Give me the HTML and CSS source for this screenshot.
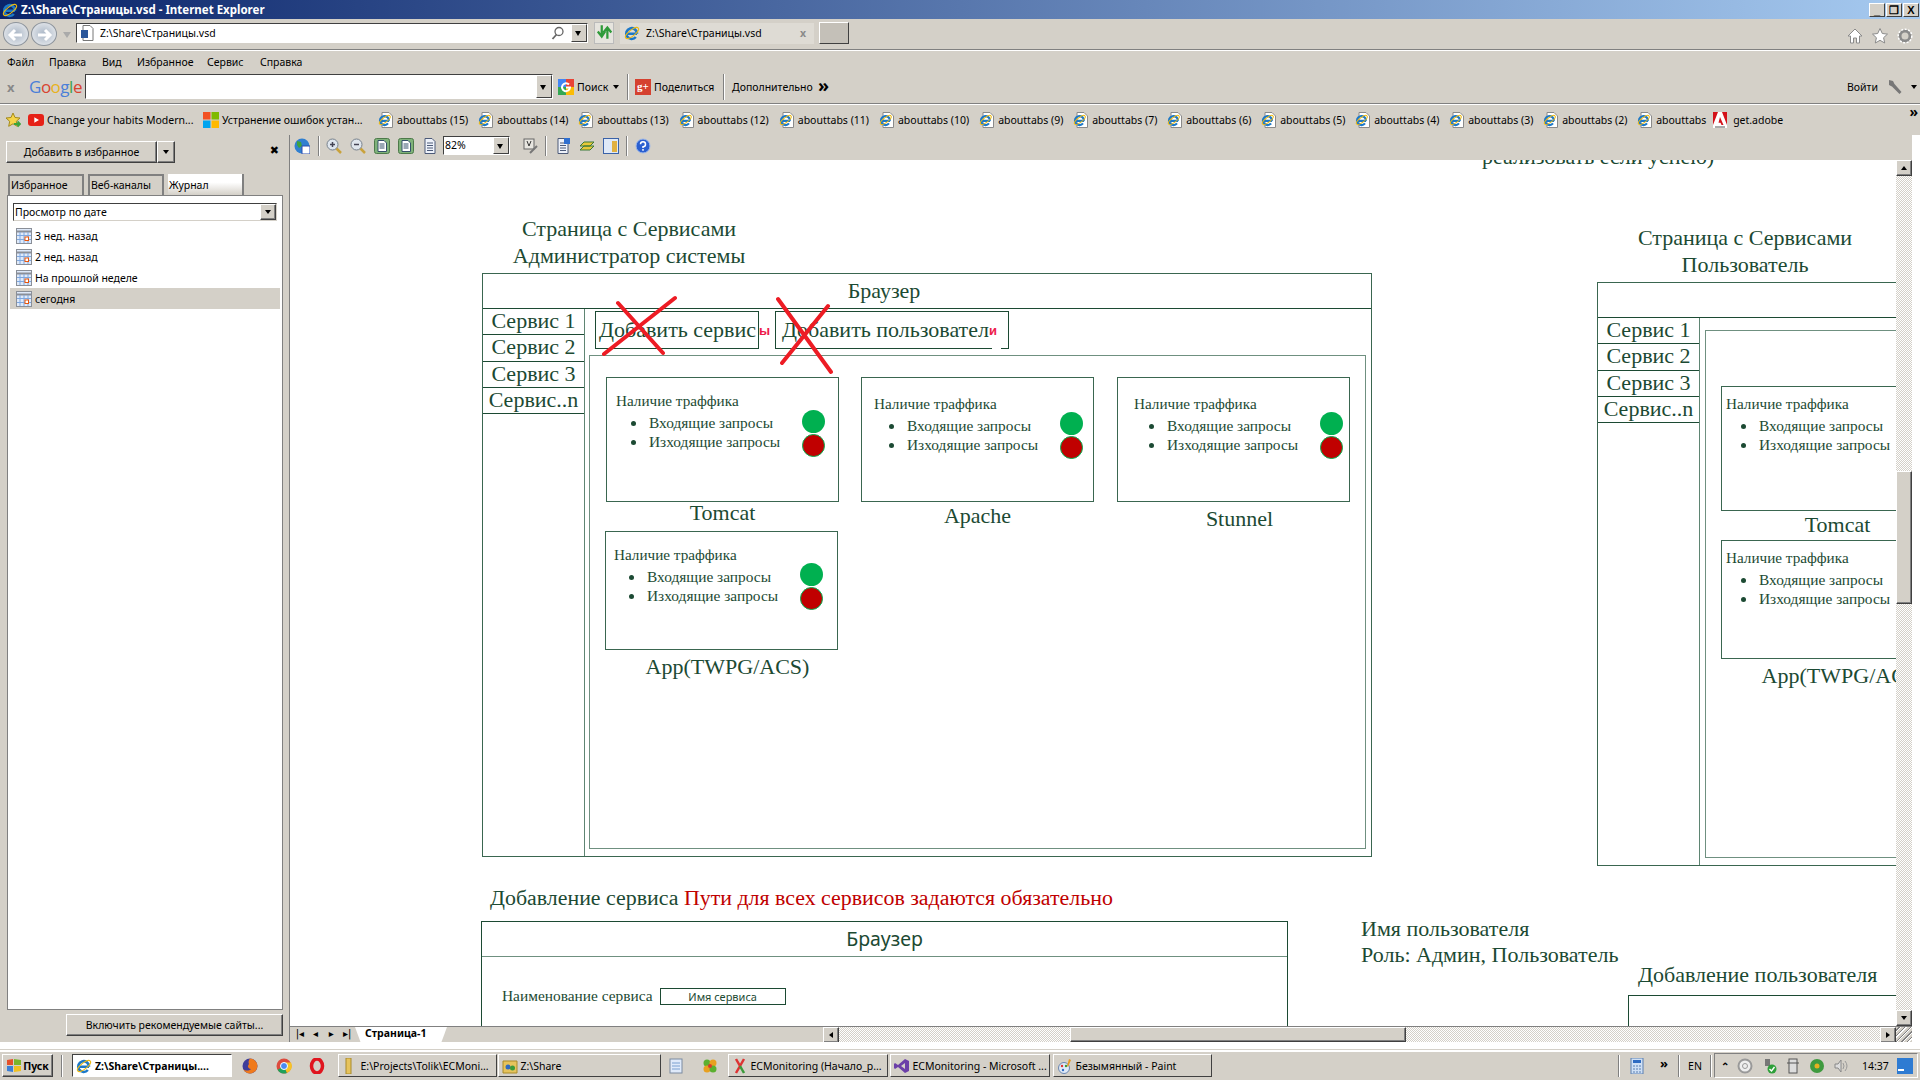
FILE: index.html
```html
<!DOCTYPE html>
<html lang="ru">
<head>
<meta charset="UTF-8">
<title>Z:\Share\Страницы.vsd - Internet Explorer</title>
<link rel="stylesheet" href="styles.css">
</head>
<body>

<svg class="sprites" aria-hidden="true">
  <symbol id="ie" viewBox="0 0 16 16">
    <path d="M3 8.800h10M13 8.800A5.400 5.400 0 1 0 11.800 12" fill="none" stroke="#1c78c8" stroke-width="2.600"/>
    <ellipse cx="8" cy="8" rx="8" ry="3" transform="rotate(-38 8 8)" fill="none" stroke="#efb90e" stroke-width="1"/>
  </symbol>
  <symbol id="page" viewBox="0 0 16 16">
    <path d="M4 .5h7l3.500 3.500v11.500H4z" fill="#fff" stroke="#8a8a8a"/>
    <path d="M2.500 8.800h8.600M11 8.800A4.500 4.500 0 1 0 10 11.400" fill="none" stroke="#1c78c8" stroke-width="2.200"/>
    <ellipse cx="6.800" cy="8" rx="6.600" ry="2.400" transform="rotate(-38 6.800 8)" fill="none" stroke="#efb90e" stroke-width="1"/>
  </symbol>
  <symbol id="cal" viewBox="0 0 16 16">
    <rect x=".5" y=".5" width="15" height="15" fill="#dfeafa" stroke="#8a8f98"/>
    <path d="M0 3.500h16" stroke="#8a8f98" stroke-width="2"/>
    <path d="M4 4v11M8 4v11M12 4v11M1 7.500h14M1 11.500h14" stroke="#7fa8e0"/>
    <rect x="9" y="9" width="3.500" height="3.500" fill="#fff" stroke="#e8560c"/>
  </symbol>
  <symbol id="doc" viewBox="0 0 16 16">
    <path d="M3 .5h7l3 3v12H3z" fill="#eef2fa" stroke="#4c5a78"/>
    <path d="M5 5h6M5 7.500h6M5 10h6M5 12.500h6" stroke="#4c5a78"/>
  </symbol>
  <symbol id="docgreen" viewBox="0 0 16 16">
    <rect x=".5" y=".5" width="15" height="15" rx="2" fill="#7fb27a" stroke="#4d7a4a"/>
    <path d="M4 2.500h6l2.500 2.500v8.500H4z" fill="#fff" stroke="#35506a"/>
    <path d="M5.500 6h5M5.500 8h5M5.500 10h5" stroke="#35506a"/>
  </symbol>
  <symbol id="lens" viewBox="0 0 16 16">
    <path d="M10 10l5 5" stroke="#c9a23c" stroke-width="2.500"/>
    <circle cx="6.500" cy="6.500" r="5.500" fill="#dfe6ee" stroke="#77818c"/>
  </symbol>
</svg>

<header class="titlebar">
  <svg class="ico16"><use href="#ie"/></svg>
  <span class="title-text">Z:\Share\Страницы.vsd - Internet Explorer</span>
  <div class="win-btns">
    <span class="win-btn">_</span><span class="win-btn">❐</span><span class="win-btn">X</span>
  </div>
</header>

<div class="addr-row">
  <span class="nav-btn"><svg viewBox="0 0 24 24"><path d="M18 12H7M11 7l-5 5 5 5" fill="none" stroke="#fff" stroke-width="3"/></svg></span>
  <span class="nav-btn"><svg viewBox="0 0 24 24"><path d="M6 12h11M13 7l5 5-5 5" fill="none" stroke="#fff" stroke-width="3"/></svg></span>
  <span class="nav-drop"></span>
  <div class="addr-box">
    <svg class="ico16" viewBox="0 0 16 16"><path d="M3 .5h7l3 3v12H3z" fill="#fff" stroke="#777"/><rect x="1" y="5" width="7" height="8" fill="#2b579a"/></svg>
    <span class="addr-text">Z:\Share\Страницы.vsd</span>
    <svg class="addr-search" viewBox="0 0 14 14"><circle cx="8" cy="5.500" r="4" fill="none" stroke="#666" stroke-width="1.300"/><path d="M5.500 8.500L1.500 13" stroke="#666" stroke-width="1.800"/></svg>
    <span class="combo-arrow"></span>
  </div>
  <span class="refresh-btn"><svg viewBox="0 0 16 16"><path d="M6 2v9M2.500 7.500L6 12l3-4.500M11 14V5M7.500 8.500L11 4l3.500 4.500" fill="none" stroke="#2f9a3a" stroke-width="2"/></svg></span>
  <div class="ie-tab">
    <svg class="ico16"><use href="#ie"/></svg>
    <span class="addr-text">Z:\Share\Страницы.vsd</span>
    <span class="tab-close">x</span>
  </div>
  <span class="new-tab"></span>
  <div class="home-icons">
    <svg viewBox="0 0 16 16"><path d="M8 1L1 8h2.500v7h3V10h3v5h3V8H15z" fill="#fff" stroke="#8a8a8a"/></svg>
    <svg viewBox="0 0 16 16"><path d="M8 .5l2.300 5 5.200.6-3.900 3.600 1.100 5.300L8 12.300 3.300 15l1.100-5.300L.5 6.100l5.200-.6z" fill="#fff" stroke="#8a8a8a"/></svg>
    <svg viewBox="0 0 16 16"><circle cx="8" cy="8" r="5" fill="none" stroke="#8a8a8a" stroke-width="3"/><circle cx="8" cy="8" r="6.800" fill="none" stroke="#fff" stroke-width="1.500" stroke-dasharray="2 1.500"/></svg>
  </div>
</div>
<div class="sep"></div>

<nav class="menu-row">
  <span class="m-file">Файл</span><span class="m-edit">Правка</span><span class="m-view">Вид</span><span class="m-fav">Избранное</span><span class="m-tools">Сервис</span><span>Справка</span>
</nav>

<div class="google-row">
  <span class="g-close">x</span>
  <span class="g-logo"><b class="c-blue">G</b><b class="c-red">o</b><b class="c-yel">o</b><b class="c-blue">g</b><b class="c-green">l</b><b class="c-red">e</b></span>
  <div class="g-input"><span class="g-drop"></span></div>
  <svg class="ico16 g-icon" viewBox="0 0 16 16"><rect width="8" height="8" fill="#4285f4"/><rect x="8" width="8" height="8" fill="#ea4335"/><rect y="8" width="8" height="8" fill="#34a853"/><rect x="8" y="8" width="8" height="8" fill="#fbbc05"/><path d="M11 5.500A4 4 0 1 0 12 8.500H8" fill="none" stroke="#fff" stroke-width="2"/></svg>
  <span class="g-search">Поиск</span><span class="tri g-tri"></span>
  <span class="g-sep"></span>
  <span class="gplus">g+</span>
  <span class="g-share">Поделиться</span>
  <span class="g-sep g-sep-2"></span>
  <span class="g-extra">Дополнительно</span>
  <span class="g-more">»</span>
  <span class="g-login">Войти</span>
  <svg class="ico16" viewBox="0 0 16 16"><path d="M2 1l4 1 1.500 3 7 8-2 2-7.500-7.500L2 6z" fill="#777"/></svg>
  <span class="tri g-tri-end"></span>
</div>
<div class="sep"></div>

<div class="bookmarks">
  <svg class="ico16 bm-star" viewBox="0 0 16 16"><path d="M8 1l2 4.500 5 .5-3.700 3.300 1 5L8 11.800 3.700 14.300l1-5L1 6l5-.5z" fill="#f6d54a" stroke="#a38a1c"/><path d="M9 12h6M12.500 9.500l2.500 2.500-2.500 2.500" fill="none" stroke="#3ba53b" stroke-width="1.800"/></svg>
  <div class="bm bm-long">
    <svg class="ico16" viewBox="0 0 16 16"><rect y="2" width="16" height="12" rx="3" fill="#e62117"/><path d="M6.300 5.200v5.600L11 8z" fill="#fff"/></svg>
    <span>Change your habits Modern...</span>
  </div>
  <div class="bm bm-long">
    <svg class="ico16" viewBox="0 0 16 16"><rect width="7.500" height="7.500" fill="#f25022"/><rect x="8.500" width="7.500" height="7.500" fill="#7fba00"/><rect y="8.500" width="7.500" height="7.500" fill="#00a4ef"/><rect x="8.500" y="8.500" width="7.500" height="7.500" fill="#ffb900"/></svg>
    <span>Устранение ошибок устан...</span>
  </div>
  <div class="bm bm-wide"><svg class="ico16"><use href="#page"/></svg><span>abouttabs (15)</span></div>
  <div class="bm bm-wide"><svg class="ico16"><use href="#page"/></svg><span>abouttabs (14)</span></div>
  <div class="bm bm-wide"><svg class="ico16"><use href="#page"/></svg><span>abouttabs (13)</span></div>
  <div class="bm bm-wide"><svg class="ico16"><use href="#page"/></svg><span>abouttabs (12)</span></div>
  <div class="bm bm-wide"><svg class="ico16"><use href="#page"/></svg><span>abouttabs (11)</span></div>
  <div class="bm bm-wide"><svg class="ico16"><use href="#page"/></svg><span>abouttabs (10)</span></div>
  <div class="bm bm-narrow"><svg class="ico16"><use href="#page"/></svg><span>abouttabs (9)</span></div>
  <div class="bm bm-narrow"><svg class="ico16"><use href="#page"/></svg><span>abouttabs (7)</span></div>
  <div class="bm bm-narrow"><svg class="ico16"><use href="#page"/></svg><span>abouttabs (6)</span></div>
  <div class="bm bm-narrow"><svg class="ico16"><use href="#page"/></svg><span>abouttabs (5)</span></div>
  <div class="bm bm-narrow"><svg class="ico16"><use href="#page"/></svg><span>abouttabs (4)</span></div>
  <div class="bm bm-narrow"><svg class="ico16"><use href="#page"/></svg><span>abouttabs (3)</span></div>
  <div class="bm bm-narrow"><svg class="ico16"><use href="#page"/></svg><span>abouttabs (2)</span></div>
  <div class="bm bm-last"><svg class="ico16"><use href="#page"/></svg><span>abouttabs</span></div>
  <div class="bm bm-adobe">
    <svg class="ico16" viewBox="0 0 16 16"><rect x="1" width="14" height="16" fill="#fff"/><path d="M1 0h5L1 13zM15 0h-5l5 13zM8 5l3.500 8H9.500l-1-2.200H6.500z" fill="#d4121a"/><path d="M3 15h10" stroke="#555"/></svg>
    <span>get.adobe</span>
  </div>
  <span class="bm-more">»</span>
</div>

<main class="main">
  <aside class="side">
    <div class="fav-actions">
      <span class="raised fav-add">Добавить в избранное</span>
      <span class="raised fav-drop"><span class="tri"></span></span>
      <span class="fav-close">✖</span>
    </div>
    <div class="fav-tabs">
      <span class="fav-tab">Избранное</span>
      <span class="fav-tab">Веб-каналы</span>
      <span class="fav-tab fav-tab-on">Журнал</span>
    </div>
    <div class="fav-panel">
      <div class="fav-combo">Просмотр по дате<span class="raised combo-btn"><span class="tri"></span></span></div>
      <ul class="hist">
        <li><svg class="ico16"><use href="#cal"/></svg>3 нед. назад</li>
        <li><svg class="ico16"><use href="#cal"/></svg>2 нед. назад</li>
        <li><svg class="ico16"><use href="#cal"/></svg>На прошлой неделе</li>
        <li class="hist-on"><svg class="ico16"><use href="#cal"/></svg>сегодня</li>
      </ul>
    </div>
    <div class="raised fav-suggest">Включить рекомендуемые сайты...</div>
  </aside>

  <section class="viewer">
    <div class="tools">
      <svg class="ico16 t-globe" viewBox="0 0 16 16"><circle cx="8" cy="8" r="7.500" fill="#2f7fd0"/><path d="M3 3l4 1 1 4-3 2-2-3zM9 11l3-1 1 2-3 2z" fill="#3da23d"/><rect x="8" y="8" width="8" height="8" fill="#fff" stroke="#2b4fb0"/></svg>
      <span class="t-sep"></span>
      <svg class="ico16 t-zoom" viewBox="0 0 16 16"><use href="#lens"/><path d="M4 6.500h5M6.500 4v5" stroke="#445" stroke-width="1.500"/></svg>
      <svg class="ico16 t-zoom" viewBox="0 0 16 16"><use href="#lens"/><path d="M4 6.500h5" stroke="#445" stroke-width="1.500"/></svg>
      <svg class="ico16 t-zoom"><use href="#docgreen"/></svg>
      <svg class="ico16 t-zoom"><use href="#docgreen"/></svg>
      <svg class="ico16 t-page"><use href="#doc"/></svg>
      <div class="zoom-combo">82%<span class="combo-arrow"></span></div>
      <svg class="ico16 t-v" viewBox="0 0 16 16"><rect x="1" y="1" width="10" height="10" fill="#e8e6e0" stroke="#666"/><path d="M4 3l2 5 2-5" fill="none" stroke="#333"/><path d="M7 15l7-7" stroke="#777" stroke-width="2"/></svg>
      <span class="t-sep t-sep-2"></span>
      <svg class="ico16 t-a" viewBox="0 0 16 16"><use href="#doc"/><path d="M9 0h6v6H9z" fill="#2f6fd0"/></svg>
      <svg class="ico16 t-a" viewBox="0 0 16 16"><path d="M1 12l4-4h10l-4 4zM1 8l4-4h10l-4 4z" fill="#e8c83a" stroke="#3a7a3a"/></svg>
      <svg class="ico16 t-b" viewBox="0 0 16 16"><rect x=".5" y=".5" width="15" height="15" fill="#dfe9f7" stroke="#3a62a8"/><rect x="9" y="3" width="5" height="11" fill="#e0b040"/></svg>
      <span class="t-sep t-sep-3"></span>
      <svg class="ico16" viewBox="0 0 16 16"><circle cx="8" cy="8" r="7" fill="#2a5fd0" stroke="#9fb9ea"/><path d="M5.500 6.200A2.500 2.500 0 1 1 8 8.700V10M8 11v1.800" fill="none" stroke="#fff" stroke-width="1.500"/></svg>
    </div>

    <div class="view-body">
      <div class="canvas">
        <p class="note">реализовать если успею)</p>

        <!-- администратор -->
        <h2 class="cap cap-admin">Страница с Сервисами<br>Администратор системы</h2>
        <div class="frame frame-admin">
          <div class="frame-head"><span class="frame-head-t">Браузер</span></div>
          <ul class="svc-menu">
            <li>Сервис 1</li><li>Сервис 2</li><li>Сервис 3</li><li>Сервис..n</li>
          </ul>
          <div class="frame-side"></div>
        </div>
        <div class="inner inner-admin"></div>
        <div class="add-btn add-svc">Добавить сервис</div>
        <div class="add-btn add-user">Добавить пользовател</div>
        <span class="add-patch"></span>
        <b class="redch redch-1">ы</b>
        <b class="redch redch-2">и</b>

        <div class="svc svc-1">
          <div class="svc-box shift-10 box-tall">
            <div class="svc-text"><p>Наличие траффика</p><ul><li>Входящие запросы</li><li>Изходящие запросы</li></ul></div>
            <div class="lamps"><i class="lamp lamp-g"></i><i class="lamp lamp-r"></i></div>
          </div>
          <div class="svc-label">Tomcat</div>
        </div>
        <div class="svc svc-2">
          <div class="svc-box shift-12 box-tall down-2">
            <div class="svc-text"><p>Наличие траффика</p><ul><li>Входящие запросы</li><li>Изходящие запросы</li></ul></div>
            <div class="lamps"><i class="lamp lamp-g"></i><i class="lamp lamp-r"></i></div>
          </div>
          <div class="svc-label label-low">Apache</div>
        </div>
        <div class="svc svc-3">
          <div class="svc-box shift-17 box-tall down-2">
            <div class="svc-text"><p>Наличие траффика</p><ul><li>Входящие запросы</li><li>Изходящие запросы</li></ul></div>
            <div class="lamps"><i class="lamp lamp-g"></i><i class="lamp lamp-r"></i></div>
          </div>
          <div class="svc-label label-right label-lower">Stunnel</div>
        </div>
        <div class="svc svc-4">
          <div class="svc-box shift-8 box-short">
            <div class="svc-text"><p>Наличие траффика</p><ul><li>Входящие запросы</li><li>Изходящие запросы</li></ul></div>
            <div class="lamps"><i class="lamp lamp-g"></i><i class="lamp lamp-r"></i></div>
          </div>
          <div class="svc-label label-right label-lower">App(TWPG/ACS)</div>
        </div>

        <svg class="crosses" viewBox="0 0 1606 866">
          <path d="M328 143L373 193M385 138L314 194M488 139L541 212M538 146L492 203" stroke="#ed1c24" stroke-width="4" stroke-linecap="round"/>
        </svg>

        <!-- пользователь -->
        <h2 class="cap cap-user">Страница с Сервисами<br>Пользователь</h2>
        <div class="frame frame-user">
          <div class="frame-head"></div>
          <ul class="svc-menu">
            <li>Сервис 1</li><li>Сервис 2</li><li>Сервис 3</li><li>Сервис..n</li>
          </ul>
          <div class="frame-side"></div>
        </div>
        <div class="inner inner-user"></div>
        <div class="svc svc-5">
          <div class="svc-box shift-5 box-tall up-box">
            <div class="svc-text"><p>Наличие траффика</p><ul><li>Входящие запросы</li><li>Изходящие запросы</li></ul></div>
          </div>
          <div class="svc-label label-low">Tomcat</div>
        </div>
        <div class="svc svc-6">
          <div class="svc-box shift-5 box-short up-box">
            <div class="svc-text"><p>Наличие траффика</p><ul><li>Входящие запросы</li><li>Изходящие запросы</li></ul></div>
          </div>
          <div class="svc-label label-right label-lower">App(TWPG/ACS)</div>
        </div>

        <!-- добавление -->
        <h3 class="add-title">Добавление сервиса <span class="warn">Пути для всех сервисов задаются обязательно</span></h3>
        <div class="form-frame">
          <div class="form-head">Браузер</div>
          <div class="form-row"><span>Наименование сервиса</span><span class="form-input">Имя сервиса</span></div>
        </div>
        <div class="user-info">Имя пользователя<br>Роль: Админ, Пользователь</div>
        <h3 class="user-title">Добавление пользователя</h3>
        <div class="user-frame"></div>
      </div>

      <div class="vscroll">
        <span class="raised sc-btn"><span class="tri tri-up"></span></span>
        <span class="sc-gap"></span>
        <span class="raised v-thumb"></span>
        <span class="sc-fill"></span>
        <span class="raised sc-btn"><span class="tri"></span></span>
      </div>
    </div>

    <div class="hscroll">
      <div class="page-nav"><span>|◂</span><span>◂</span><span>▸</span><span>▸|</span></div>
      <span class="page-tab">Страница-1</span>
      <span class="h-space"></span>
      <span class="raised sc-btn"><span class="tri tri-left"></span></span>
      <span class="sc-fill h-gap"></span>
      <span class="raised h-thumb"></span>
      <span class="sc-fill"></span>
      <span class="raised sc-btn"><span class="tri tri-right"></span></span>
      <span class="grip"></span>
    </div>
  </section>
</main>

<div class="white-strip"></div>

<footer class="taskbar">
  <span class="raised start"><svg class="ico16" viewBox="0 0 16 16"><path d="M1 2l6-1v6H1z" fill="#e5512a"/><path d="M8 1l7 1v5H8z" fill="#7ab52a"/><path d="M1 8h6v6l-6-1z" fill="#3c7fd6"/><path d="M8 8h7v5l-7 1z" fill="#f0c020"/></svg>Пуск</span>
  <span class="tb-sep"></span>
  <span class="task task-on"><svg class="ico16"><use href="#ie"/></svg>Z:\Share\Страницы....</span>
  <svg class="ico16 ql" viewBox="0 0 16 16"><circle cx="8" cy="8" r="7.500" fill="#3f3d9a"/><path d="M8 .5A7.500 7.500 0 1 1 1 11C3 13 7 13 9 11 6 11 5 8 7 6 6 4 7 2 8 .5z" fill="#f07a1c"/></svg>
  <svg class="ico16 ql" viewBox="0 0 16 16"><circle cx="8" cy="8" r="7.500" fill="#dd4b3e"/><path d="M8 8L1.500 11.700A7.500 7.500 0 0 0 11 15z" fill="#1fa15a"/><path d="M8 8l3 7A7.500 7.500 0 0 0 15 4.500H8z" fill="#f7c325"/><circle cx="8" cy="8" r="3.500" fill="#4a8af4" stroke="#fff"/></svg>
  <svg class="ico16 ql" viewBox="0 0 16 16"><ellipse cx="8" cy="8" rx="5.500" ry="7" fill="none" stroke="#e0151f" stroke-width="3.500"/></svg>
  <span class="task task-folder"><svg class="ico16" viewBox="0 0 16 16"><path d="M4 0h5v16H4z" fill="#e6c35c" stroke="#a98a2a"/></svg>E:\Projects\Tolik\ECMoni...</span>
  <span class="task task-share"><svg class="ico16" viewBox="0 0 16 16"><path d="M1 3h14v12H1z" fill="#e6c35c" stroke="#a98a2a"/><circle cx="6" cy="9" r="2.500" fill="#2e6bc2"/><circle cx="10.500" cy="10" r="2.500" fill="#3a9a3a"/></svg>Z:\Share</span>
  <svg class="ico16 ql-a" viewBox="0 0 16 16"><rect x="2" y="1" width="12" height="14" fill="#dfeafa" stroke="#7a8aa0"/><path d="M4 5h8M4 8h8M4 11h8" stroke="#7aa0d0"/></svg>
  <svg class="ico16 ql-b" viewBox="0 0 16 16"><circle cx="5" cy="5" r="3.500" fill="#5bb030"/><circle cx="11" cy="5" r="3.500" fill="#e8a020"/><circle cx="5" cy="11" r="3.500" fill="#e8a020"/><circle cx="11" cy="11" r="3.500" fill="#5bb030"/><circle cx="8" cy="8" r="2" fill="#d8392c"/></svg>
  <span class="task task-mon"><svg class="ico16" viewBox="0 0 16 16"><path d="M4 1l4 7-4 7M12 1L8 8" fill="none" stroke="#d33" stroke-width="2.500"/><path d="M8 8l4 7" stroke="#3a9a3a" stroke-width="2.500"/></svg>ECMonitoring (Начало_р...</span>
  <span class="task task-vs"><svg class="ico16" viewBox="0 0 16 16"><path d="M11 1l4 2v10l-4 2-7-6-3 2-1-1V6l1-1 3 2zM11 5L7 8l4 3z" fill="#6b3fa8"/></svg>ECMonitoring - Microsoft ...</span>
  <span class="task task-paint"><svg class="ico16" viewBox="0 0 16 16"><circle cx="7" cy="10" r="5.500" fill="#dfe9f7" stroke="#6a86b0"/><circle cx="5" cy="8" r="1.200" fill="#d33"/><circle cx="9" cy="8" r="1.200" fill="#3a9a3a"/><circle cx="6" cy="12" r="1.200" fill="#2e6bc2"/><path d="M12 1l2 1-3 7-1-1z" fill="#e89a20"/></svg>Безымянный - Paint</span>
  <span class="tb-push"></span>
  <span class="tb-sep"></span>
  <svg class="ico16 tb-calc" viewBox="0 0 16 16"><rect x="2" y="0" width="12" height="16" fill="#cfe0f5" stroke="#5a7fb0"/><rect x="4" y="2" width="8" height="3" fill="#2e6bc2"/><path d="M4 8h8M4 11h8M4 14h8" stroke="#5a7fb0" stroke-dasharray="2 1"/></svg>
  <span class="tb-more">»</span>
  <span class="tb-sep"></span>
  <span class="tb-lang">EN</span>
  <span class="tb-sep"></span>
  <div class="tray">
    <span class="tray-up">⌃</span>
    <svg class="ico16" viewBox="0 0 16 16"><circle cx="8" cy="8" r="6.500" fill="#eee" stroke="#999" stroke-width="2"/><circle cx="8" cy="8" r="2.500" fill="none" stroke="#999"/></svg>
    <svg class="ico16" viewBox="0 0 16 16"><path d="M4 1h5v7H4z" fill="#777"/><circle cx="11" cy="11" r="4.500" fill="#2ea03a"/><path d="M8.500 11l2 2 3-4" fill="none" stroke="#fff" stroke-width="1.400"/></svg>
    <svg class="ico16" viewBox="0 0 16 16"><rect x="4" y="1" width="8" height="14" fill="#ddd" stroke="#555"/><path d="M2 5h12" stroke="#555"/></svg>
    <svg class="ico16" viewBox="0 0 16 16"><circle cx="8" cy="8" r="7" fill="#3f9a3f"/><circle cx="8" cy="8" r="2.500" fill="#e8b020"/></svg>
    <svg class="ico16" viewBox="0 0 16 16"><path d="M2 6h3l3-4v12l-3-4H2z" fill="#ddd" stroke="#888"/><path d="M10 5q2 3 0 6M12 3q4 5 0 10" fill="none" stroke="#999"/></svg>
    <span class="tray-time">14:37</span>
    <svg class="ico16" viewBox="0 0 16 16"><rect width="16" height="16" fill="#2e7bd2"/><rect x="1" y="11" width="6" height="2" fill="#fff"/></svg>
  </div>
</footer>

</body>
</html>
```

FILE: styles.css
```css
* { box-sizing: border-box; }

html, body {
    margin: 0;
    padding: 0;
}

body {
    width: 1920px;
    height: 1080px;
    overflow: hidden;
    background: #d4d0c8;
    font-family: "Noto Sans", "Liberation Sans", sans-serif;
    font-size: 10.500px;
    color: #000;
    display: flex;
    flex-direction: column;
}

ul { margin: 0; padding: 0; list-style: none; }
h2, h3, p { margin: 0; font-weight: normal; }

.sprites { position: absolute; width: 0; height: 0; }

.ico16 { width: 16px; height: 16px; flex: none; display: block; }

.raised {
    background: #d4d0c8;
    border: 1px solid;
    border-color: #fff #404040 #404040 #fff;
    box-shadow: inset -1px -1px 0 #808080;
    display: flex;
    align-items: center;
    justify-content: center;
}

.tri {
    width: 0;
    height: 0;
    border: 3.500px solid transparent;
    border-top: 4px solid #000;
    border-bottom: 0;
    display: block;
}
.tri-up { border-top: 0; border-bottom: 4px solid #000; }
.tri-left { border: 3.500px solid transparent; border-right: 4px solid #000; border-left: 0; }
.tri-right { border: 3.500px solid transparent; border-left: 4px solid #000; border-right: 0; }

.sep {
    height: 2px;
    flex: none;
    background: #fff;
    border-top: 1px solid #808080;
}

/* title bar */
.titlebar {
    height: 19px;
    flex: none;
    display: flex;
    align-items: center;
    padding-left: 2px;
    gap: 3px;
    color: #fff;
    background: linear-gradient(90deg, #0a246a, #a6caf0);
    font-weight: 700;
    font-size: 11.500px;
}
.win-btns { margin-left: auto; display: flex; gap: 1px; padding-right: 1px; }
.win-btn {
    width: 16px;
    height: 14px;
    background: #d4d0c8;
    border: 1px solid;
    border-color: #fff #404040 #404040 #fff;
    color: #000;
    font: 700 11px/12px "Liberation Sans", sans-serif;
    text-align: center;
}

/* address row */
.addr-row {
    height: 30px;
    flex: none;
    display: flex;
    align-items: center;
    padding-left: 3px;
}
.nav-btn {
    width: 26px;
    height: 24px;
    margin-right: 2px;
    border-radius: 50%;
    background: radial-gradient(#a9b6c6, #dfe3e8 75%);
    border: 1px solid #8d949c;
}
.nav-btn svg { display: block; }
.nav-drop {
    margin: 2px 5px 0 4px;
    width: 0;
    height: 0;
    border: 4px solid transparent;
    border-top: 6px solid #aaa;
    border-bottom: 0;
}
.addr-box {
    width: 512px;
    height: 20px;
    margin-top: -2px;
    background: #fff;
    border: 1px solid;
    border-color: #404040 #fff #fff #404040;
    display: flex;
    align-items: center;
    padding-left: 3px;
    gap: 4px;
    position: relative;
}
.addr-search { width: 14px; height: 14px; margin-left: auto; margin-right: 22px; }
.combo-arrow {
    position: absolute;
    right: 0;
    top: 0;
    bottom: 0;
    width: 16px;
    background: #d4d0c8;
    border: 1px solid;
    border-color: #fff #404040 #404040 #fff;
}
.combo-arrow::after {
    content: "";
    position: absolute;
    left: 3px;
    top: 6px;
    border: 3.500px solid transparent;
    border-top: 5px solid #000;
    border-bottom: 0;
}
.refresh-btn {
    width: 20px;
    height: 22px;
    margin: -2px 6px 0 6px;
    background: #e6e4de;
    border: 1px solid #bbb;
}
.refresh-btn svg { display: block; }
.ie-tab {
    width: 194px;
    height: 21px;
    margin-top: -2px;
    background: #dedbd4;
    display: flex;
    align-items: center;
    padding-left: 4px;
    gap: 6px;
}
.tab-close { margin-left: auto; padding-right: 8px; color: #8a8a8a; font-weight: 700; }
.new-tab {
    width: 30px;
    height: 22px;
    margin: -2px 0 0 5px;
    background: #c4c0b8;
    border: 1px solid;
    border-color: #fff #404040 #404040 #fff;
}
.home-icons { margin-left: auto; margin-top: 3px; display: flex; gap: 9px; padding-right: 7px; }
.home-icons svg { width: 16px; height: 16px; display: block; }

/* menu */
.menu-row {
    height: 21px;
    flex: none;
    display: flex;
    align-items: center;
    padding-left: 7px;
}
.m-file { width: 42px; }
.m-edit { width: 53px; }
.m-view { width: 35px; }
.m-fav { width: 70px; }
.m-tools { width: 53px; }

/* google toolbar */
.google-row {
    height: 31px;
    flex: none;
    display: flex;
    align-items: center;
    padding: 0 0 2px 7px;
}
.g-close { width: 22px; color: #888; font-size: 13px; font-weight: 700; }
.g-logo { width: 56px; font: 17px "Open Sans", sans-serif; letter-spacing: -.5px; }
.g-logo b { font-weight: 400; }
.c-blue { color: #4a7fd8; }
.c-red { color: #d8432f; }
.c-yel { color: #e8b21c; }
.c-green { color: #3da24f; }
.g-input {
    width: 468px;
    height: 25px;
    background: #fff;
    border: 1px solid;
    border-color: #404040 #fff #fff #404040;
    position: relative;
}
.g-drop {
    position: absolute;
    right: 0;
    top: 0;
    bottom: 0;
    width: 16px;
    background: #d4d0c8;
    border: 1px solid;
    border-color: #fff #404040 #404040 #fff;
}
.g-drop::after {
    content: "";
    position: absolute;
    left: 3px;
    top: 9px;
    border: 3.500px solid transparent;
    border-top: 5px solid #000;
    border-bottom: 0;
}
.g-icon { margin-left: 5px; }
.g-search { margin-left: 3px; width: 33px; }
.g-tri { margin: 0 8px 0 3px; }
.g-sep { width: 1px; height: 26px; background: #808080; margin-right: 7px; box-shadow: 1px 0 #fff; }
.g-sep-2 { margin: 0 8px 0 7px; }
.gplus {
    width: 16px;
    height: 16px;
    margin-right: 3px;
    background: #d5412f;
    color: #fff;
    font: 700 11px/15px "Liberation Serif", serif;
    text-align: center;
}
.g-share { width: 62px; white-space: nowrap; }
.g-extra { width: 81px; white-space: nowrap; }
.g-more { margin-left: 5px; font-size: 18px; font-weight: 700; line-height: 16px; margin-top: -3px; }
.g-login { margin-left: auto; margin-right: 9px; }
.g-tri-end { margin: 0 3px 0 8px; }

/* bookmarks */
.bookmarks {
    height: 30px;
    flex: none;
    display: flex;
    align-items: center;
    padding-left: 5px;
    position: relative;
}
.bm-star { margin-right: 7px; }
.bm { display: flex; align-items: center; gap: 3px; white-space: nowrap; flex: none; }
.bm-long { width: 175px; }
.bm-wide { width: 100.200px; }
.bm-narrow { width: 94px; }
.bm-last { width: 75px; }
.bm-adobe { gap: 5px; }
.bm-more { position: absolute; right: 2px; top: 0; font-size: 14px; font-weight: 700; line-height: 14px; }

/* main */
.main {
    height: 907px;
    flex: none;
    display: flex;
    background: #fff;
}

.side {
    width: 290px;
    flex: none;
    background: #d4d0c8;
    border-right: 1px solid #808080;
    display: flex;
    flex-direction: column;
    padding: 6px 6px 6px 6px;
}
.fav-actions { display: flex; align-items: center; height: 22px; }
.fav-add { width: 151px; height: 22px; }
.fav-drop { width: 18px; height: 22px; }
.fav-close { margin-left: auto; margin-right: 4px; font: 700 11px "DejaVu Sans", sans-serif; margin-top: -3px; }
.fav-tabs { display: flex; gap: 4px; height: 21px; margin: 11px 0 0 2px; }
.fav-tab {
    width: 76px;
    border: 2px solid #808080;
    border-bottom: 0;
    padding: 2px 0 0 1px;
    line-height: 15px;
}
.fav-tab-on { background: linear-gradient(#fff 40%, #d4d0c8); border-width: 0 2px 0 0; padding-top: 4px; }
.fav-panel {
    flex: 1;
    background: #fff;
    border: 1px solid #808080;
    margin: 0 0 4px 1px;
    padding: 7px 2px 0 2px;
}
.fav-combo {
    height: 18px;
    margin: 0 3px;
    border: 1px solid;
    border-color: #404040 #d4d0c8 #d4d0c8 #404040;
    padding-left: 1px;
    line-height: 16px;
    position: relative;
}
.combo-btn { position: absolute; right: 0; top: 0; width: 16px; height: 16px; }
.hist { margin-top: 4px; }
.hist li {
    height: 21px;
    display: flex;
    align-items: center;
    gap: 3px;
    padding-left: 6px;
}
.hist-on { background: #d4d0c8; }
.fav-suggest { margin-left: 60px; height: 22px; }

/* viewer */
.viewer {
    width: 1622px;
    flex: none;
    display: flex;
    flex-direction: column;
    background: #d4d0c8;
}
.tools {
    height: 25px;
    flex: none;
    display: flex;
    align-items: center;
    padding: 0 0 4px 4px;
}
.t-globe { margin-right: 8px; }
.t-sep { width: 1px; height: 20px; background: #808080; box-shadow: 1px 0 #fff; margin-right: 7px; }
.t-sep-2 { margin: 0 9px 0 6px; }
.t-sep-3 { margin: 0 8px 0 7px; }
.t-zoom { margin-right: 8px; }
.t-page { margin-right: 5px; }
.zoom-combo {
    width: 67px;
    height: 19px;
    background: #fff;
    border: 1px solid;
    border-color: #404040 #fff #fff #404040;
    line-height: 17px;
    padding-left: 1px;
    position: relative;
}
.t-v { margin-left: 13px; }
.t-a { margin-right: 8px; }
.t-b { margin-right: 0; }

.view-body { height: 866px; flex: none; display: flex; }
.canvas {
    width: 1606px;
    flex: none;
    position: relative;
    overflow: hidden;
    background: #fff;
    border-left: 0;
    color: #1c4a33;
    font-family: "Liberation Serif", serif;
    font-size: 22px;
}

.vscroll {
    width: 16px;
    flex: none;
    display: flex;
    flex-direction: column;
}
.sc-btn { width: 16px; height: 16px; flex: none; }
.sc-gap { height: 295px; flex: none; background: repeating-conic-gradient(#d4d0c8 0 25%, #fff 0 50%) 0 0/2px 2px; }
.v-thumb { height: 133px; flex: none; }
.sc-fill { flex: 1; background: repeating-conic-gradient(#d4d0c8 0 25%, #fff 0 50%) 0 0/2px 2px; }

.hscroll {
    height: 16px;
    flex: none;
    display: flex;
    align-items: stretch;
    border-top: 1px solid #808080;
}
.page-nav { width: 65px; display: flex; padding: 0 0 0 2px; font: 10px/14px "DejaVu Sans", sans-serif; }
.page-nav span { width: 16px; text-align: center; }
.page-tab {
    width: 92px;
    padding-left: 10px;
    font-weight: 700;
    line-height: 13px;
    background: #fff;
    clip-path: polygon(0 0, 100% 0, 94% 100%, 6% 100%);
}
.h-space { width: 376px; flex: none; }
.h-gap { flex: none; width: 231px; }
.h-thumb { width: 336px; flex: none; }
.grip { width: 16px; flex: none; background: repeating-linear-gradient(135deg, #d4d0c8 0 2px, #808080 2px 3px, #fff 3px 4px); }

.white-strip { height: 8px; flex: none; background: #fff; border-bottom: 0; }

/* diagram on the canvas */
.note { position: absolute; left: 1192px; top: -15px; white-space: nowrap; line-height: 24px; }

.cap {
    position: absolute;
    width: 300px;
    text-align: center;
    font-size: 22px;
    line-height: 26.500px;
}
.cap-admin { left: 189px; top: 56px; }
.cap-user { left: 1305px; top: 65px; }

.frame {
    position: absolute;
    width: 890px;
    height: 584px;
    border: 1px solid #3a6650;
    display: grid;
    grid-template-columns: 102px 1fr;
    grid-template-rows: 35px 1fr;
}
.frame-admin { left: 192px; top: 113px; }
.frame-user { left: 1307px; top: 122px; }
.frame-head {
    grid-column: 1 / 3;
    border-bottom: 1px solid #1c4a33;
    text-align: center;
    line-height: 33px;
}
.frame-head-t { display: block; padding-right: 86px; }
.svc-menu { border-right: 0; }
.svc-menu li {
    height: 26.330px;
    border-bottom: 1px solid #1c4a33;
    border-right: 1px solid #1c4a33;
    text-align: center;
    font-size: 22px;
    line-height: 24px;
    white-space: nowrap;
}
.frame-side { position: absolute; left: 101px; top: 35px; bottom: 0; border-left: 1px solid #5f8573; }

.inner {
    position: absolute;
    width: 777px;
    border: 1px solid #6f9080;
    height: 494px;
}
.inner-admin { left: 299px; top: 195px; }
.inner-user { left: 1415px; top: 170px; width: 800px; height: 528px; }

.add-btn {
    position: absolute;
    top: 151px;
    height: 38px;
    border: 1px solid #1c4a33;
    padding-left: 3px;
    line-height: 35px;
    white-space: nowrap;
    overflow: hidden;
    font-size: 22px;
}
.add-svc { left: 305px; width: 164px; }
.add-user { left: 485px; width: 234px; padding-left: 6px; }
.add-patch { position: absolute; left: 702px; top: 187px; width: 9px; height: 3px; background: #fff; }
.redch { position: absolute; top: 163px; color: #ed1c4a; font: 700 13px/16px "Liberation Sans", sans-serif; }
.redch-1 { left: 469px; }
.redch-2 { left: 699px; }

.crosses {
    position: absolute;
    left: 0;
    top: 0;
    width: 1606px;
    height: 866px;
    pointer-events: none;
}

.svc { position: absolute; width: 233px; }
.svc-1 { left: 316px; top: 217px; }
.svc-2 { left: 571px; top: 217px; }
.svc-3 { left: 827px; top: 217px; }
.svc-4 { left: 315px; top: 371px; }
.svc-5 { left: 1431px; top: 226px; }
.svc-6 { left: 1431px; top: 380px; }

.svc-box {
    border: 1px solid #3a6650;
    display: flex;
    align-items: flex-start;
    padding-top: 14px;
    font-size: 15.400px;
    line-height: 18.500px;
}
.box-tall { height: 125px; }
.box-short { height: 119px; }
.down-2 { padding-top: 17px; }
.up-box { padding-top: 8px; }
.shift-5 { padding-left: 4px; }
.shift-8 { padding-left: 8px; }
.shift-10 { padding-left: 9px; }
.shift-12 { padding-left: 12px; }
.shift-17 { padding-left: 16px; }

.svc-text { width: 186px; flex: none; white-space: nowrap; }
.svc-text p { height: 22px; font-size: 15.200px; }
.svc-text li { padding-left: 33px; position: relative; }
.svc-text li::before {
    content: "";
    position: absolute;
    left: 15px;
    top: 7px;
    width: 5px;
    height: 5px;
    border-radius: 50%;
    background: #1c4a33;
}
.lamps { display: flex; flex-direction: column; gap: 1px; margin-top: 18px; }
.down-2 .lamps, .box-short .lamps { margin-top: 17px; }
.lamp { width: 23px; height: 23px; border-radius: 50%; display: block; }
.lamp-g { background: #00b050; }
.lamp-r { background: #c00000; border: 1px solid #00b050; }

.svc-label { text-align: center; font-size: 22px; line-height: 24px; margin-top: -1px; }
.label-low { padding-top: 3px; }
.label-lower { padding-top: 6px; }
.label-right { padding-left: 12px; white-space: nowrap; }

.add-title {
    position: absolute;
    left: 200px;
    top: 726px;
    font-size: 21.900px;
    line-height: 24px;
    white-space: nowrap;
}
.warn { color: #c00000; }

.form-frame {
    position: absolute;
    left: 191px;
    top: 761px;
    width: 807px;
    height: 200px;
    border: 1px solid #1c4a33;
}
.form-head {
    height: 35px;
    border-bottom: 1px solid #6f9080;
    text-align: center;
    font: 19.500px/34px "Noto Sans", sans-serif;
}
.form-row {
    display: flex;
    align-items: center;
    gap: 7px;
    padding: 30px 0 0 20px;
    font-size: 15.400px;
}
.form-input {
    width: 126px;
    height: 17px;
    border: 1px solid #1c4a33;
    text-align: center;
    font: 11px/15px "Noto Sans", sans-serif;
}

.user-info { position: absolute; left: 1071px; top: 756px; line-height: 26px; white-space: nowrap; }
.user-title { position: absolute; left: 1348px; top: 803px; line-height: 24px; font-size: 22px; white-space: nowrap; }
.user-frame { position: absolute; left: 1338px; top: 835px; width: 400px; height: 100px; border: 1px solid #1c4a33; }

/* taskbar */
.taskbar {
    height: 30px;
    flex: none;
    border-top: 2px solid #fff;
    display: flex;
    align-items: center;
    padding: 0 2px 1px;
    box-shadow: 0 -1px 0 #d4d0c8;
}
.start { width: 51px; height: 23px; gap: 1px; font-weight: 700; padding: 0 1px; }
.tb-sep { width: 2px; height: 22px; background: #808080; border-right: 1px solid #fff; flex: none; }
.start + .tb-sep { margin: 0 9px 0 8px; }
.task {
    height: 23px;
    display: flex;
    align-items: center;
    gap: 3px;
    padding-left: 3px;
    border: 1px solid;
    border-color: #fff #404040 #404040 #fff;
    white-space: nowrap;
    overflow: hidden;
    flex: none;
}
.task-on { width: 160px; background: #fff; border-color: #404040 #fff #fff #404040; font-weight: 700; margin-right: 10px; }
.ql { margin-right: 17.500px; }
.task-folder { width: 159px; margin-right: 1px; margin-left: -5px; }
.task-share { width: 163px; margin-right: 7px; }
.ql-a { margin-right: 18px; }
.ql-b { margin-right: 10px; }
.task-mon { width: 160px; margin-right: 2px; }
.task-vs { width: 160px; margin-right: 3px; }
.task-paint { width: 159px; }
.tb-push { flex: 1; }
.tb-calc { margin: 0 15px 0 9px; }
.tb-more { width: 12px; margin-right: 6px; font-size: 13px; font-weight: 700; line-height: 13px; margin-top: -5px; }
.tb-lang { width: 30px; text-align: center; }
.tray {
    width: 204px;
    height: 25px;
    margin-left: 2px;
    border: 1px solid;
    border-color: #808080 #fff #fff #808080;
    display: flex;
    align-items: center;
    gap: 8px;
    padding-left: 6px;
}
.tray-up { width: 8px; font-size: 10px; font-weight: 700; }
.tray-time { margin-left: 5px; }
```
